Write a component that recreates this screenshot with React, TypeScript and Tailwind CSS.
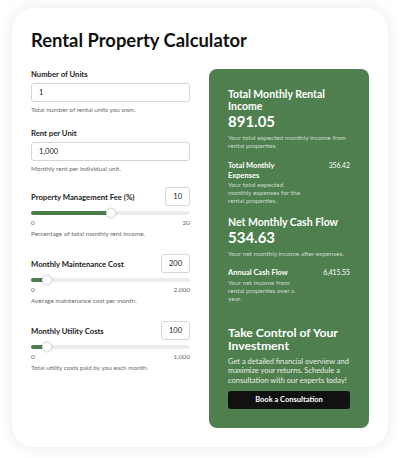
import React from "react";

const font = { fontFamily: 'Lato, "Open Sans", sans-serif' };

function TextField({ label, value, help }: { label: string; value: string; help: string }) {
  return (
    <div className="flex flex-col">
      <div className="text-[7.7px] leading-[10px] font-bold text-[#1c1c1c]">{label}</div>
      <div className="mt-[4px] h-[19px] rounded-[3px] border border-[#d6d6d6] bg-white flex items-center px-[7px] text-[7.5px] text-[#222]">
        {value}
      </div>
      <div className="mt-[3px] text-[6.4px] leading-[9px] text-[#6a6a6a]">{help}</div>
    </div>
  );
}

function SliderField({
  label,
  value,
  min,
  max,
  pct,
  help,
}: {
  label: string;
  value: string;
  min: string;
  max: string;
  pct: number;
  help: string;
}) {
  return (
    <div className="flex flex-col">
      <div className="flex items-center justify-between h-[19px]">
        <div className="text-[7.7px] leading-[10px] font-bold text-[#1c1c1c]">{label}</div>
        <div className="h-[19px] min-w-[24px] px-[7px] rounded-[3px] border border-[#d6d6d6] flex items-center justify-center text-[7.5px] text-[#222]">
          {value}
        </div>
      </div>
      <div className="relative mt-[2px] h-[10px] flex items-center">
        <div className="w-full h-[4px] rounded-full bg-[#ececec]" />
        <div
          className="absolute left-0 h-[4px] rounded-full bg-[#4c7d4c]"
          style={{ width: `${pct}%` }}
        />
        <div
          className="absolute top-0 w-[10px] h-[10px] rounded-full bg-white border border-[#e2e2e2] shadow-[0_0_2px_rgba(0,0,0,0.2)]"
          style={{ left: `calc(${pct}% - 5px)` }}
        />
      </div>
      <div className="mt-[1px] flex justify-between text-[6.5px] leading-[8px] text-[#6a6a6a]">
        <span>{min}</span>
        <span>{max}</span>
      </div>
      <div className="mt-[2px] text-[6.4px] leading-[9px] text-[#6a6a6a]">{help}</div>
    </div>
  );
}

export default function App() {
  return (
    <div className="w-[400px] h-[458px] bg-white pt-[8px] px-[12px]" style={font}>
      <div className="rounded-[22px] bg-white shadow-[0_0_16px_rgba(0,0,0,0.09)] px-[19px] pt-[20px] pb-[19px]">
        <h1 className="text-[18.4px] leading-[24px] font-bold text-[#111]">Rental Property Calculator</h1>
        <div className="mt-[17px] flex gap-[19px]">
          <div className="w-[159px] flex flex-col">
            <TextField label="Number of Units" value="1" help="Total number of rental units you own." />
            <div className="mt-[14px]">
              <TextField label="Rent per Unit" value="1,000" help="Monthly rent per individual unit." />
            </div>
            <div className="mt-[14px]">
              <SliderField
                label="Property Management Fee (%)"
                value="10"
                min="0"
                max="20"
                pct={50}
                help="Percentage of total monthly rent income."
              />
            </div>
            <div className="mt-[16px]">
              <SliderField
                label="Monthly Maintenance Cost"
                value="200"
                min="0"
                max="2,000"
                pct={10}
                help="Average maintenance cost per month."
              />
            </div>
            <div className="mt-[16px]">
              <SliderField
                label="Monthly Utility Costs"
                value="100"
                min="0"
                max="1,000"
                pct={10}
                help="Total utility costs paid by you each month."
              />
            </div>
          </div>
          <div className="w-[160px] rounded-[8px] bg-[#4f7f4f] p-[19px] flex flex-col text-white">
            <div className="text-[10.5px] leading-[12px] font-bold">Total Monthly Rental Income</div>
            <div className="text-[15px] leading-[18px] font-bold">891.05</div>
            <div className="mt-[4px] text-[6.5px] leading-[8px] text-white/70">
              Your total expected monthly income from rental properties.
            </div>
            <div className="mt-[11px] flex justify-between">
              <div className="w-[75px]">
                <div className="text-[7.5px] leading-[9.5px] font-bold">Total Monthly Expenses</div>
                <div className="mt-[1px] text-[6.5px] leading-[8px] text-white/70">
                  Your total expected monthly expenses for the rental properties.
                </div>
              </div>
              <div className="text-[6.8px] leading-[9.5px]">356.42</div>
            </div>
            <div className="mt-[11px] text-[10.5px] leading-[12px] font-bold whitespace-nowrap">Net Monthly Cash Flow</div>
            <div className="text-[15px] leading-[18px] font-bold">534.63</div>
            <div className="mt-[4px] text-[6.5px] leading-[8px] text-white/70">
              Your net monthly income after expenses.
            </div>
            <div className="mt-[10px] flex justify-between">
              <div className="w-[75px]">
                <div className="text-[7.5px] leading-[9.5px] font-bold">Annual Cash Flow</div>
                <div className="mt-[1px] text-[6.5px] leading-[8px] text-white/70">
                  Your net income from rental properties over a year.
                </div>
              </div>
              <div className="text-[6.8px] leading-[9.5px]">6,415.55</div>
            </div>
            <div className="mt-[23px] text-[12.2px] leading-[13.5px] font-bold">Take Control of Your Investment</div>
            <div className="mt-[4px] text-[7.5px] leading-[9.5px] text-white/85">
              Get a detailed financial overview and maximize your returns. Schedule a consultation with our experts today!
            </div>
            <button className="mt-[6px] h-[18px] rounded-[3px] bg-[#111] text-white text-[7.5px] font-bold">
              Book a Consultation
            </button>
          </div>
        </div>
      </div>
    </div>
  );
}
